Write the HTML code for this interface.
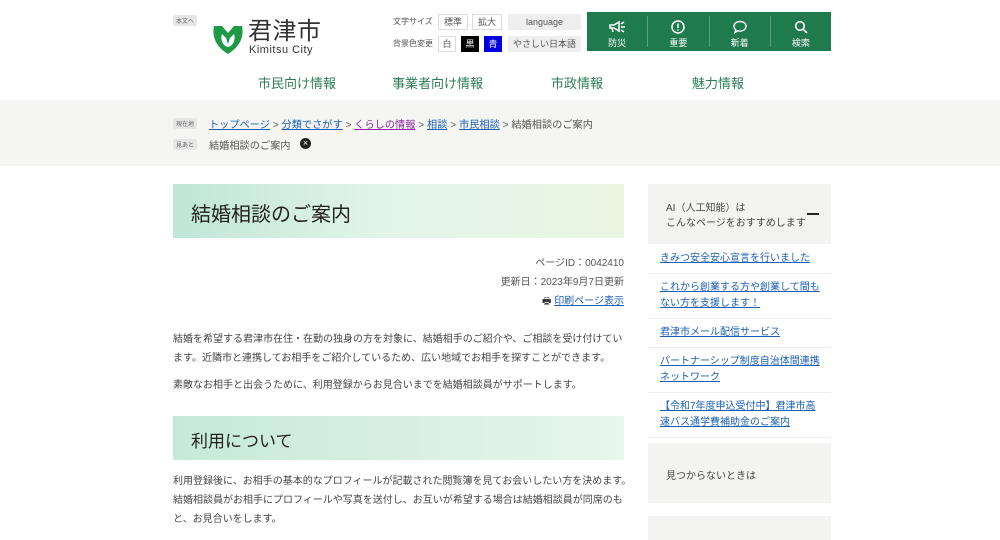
<!DOCTYPE html>
<html><head><meta charset="utf-8"><style>
*{margin:0;padding:0;box-sizing:border-box}
body{width:1000px;height:540px;overflow:hidden;background:#fff;font-family:"Liberation Sans","Noto Sans CJK JP",sans-serif;color:#333;position:relative}
.a{position:absolute}
.btn{position:absolute;font-size:9px;border:1px solid #ddd;text-align:center;line-height:14px;height:16px;color:#555;background:#fff}
.gray{background:#eee;border-color:#eee}
a{color:#1a5fb4;text-decoration:underline}
.nav{position:absolute;top:73px;font-size:13px;color:#2e7d56}
.crumb{font-size:10.2px}
.lbl{position:absolute;font-size:6px;background:#e6e6e6;color:#666;padding:1px 3px;border-radius:2px}
p.t{font-size:10px;line-height:19px;color:#444}
.side a{display:block;font-size:10px;line-height:16px;padding:6px 10px 6px 12px;border-bottom:1px solid #eee}
</style></head><body>
<div class="lbl" style="left:173px;top:15px">本文へ</div>
<svg class="a" style="left:211px;top:22px" width="34" height="34" viewBox="0 0 34 34"><path d="M3 4 L11 4 L17 11 L23 4 L31 4 C33 14 30 24 17 32 C4 24 1 14 3 4Z" fill="#1e9a46"/><path d="M11 12 C9 18 12 24 17 25 C22 24 25 18 23 12 L19 16 L17 22 L15 16Z" fill="#fff"/></svg>
<div class="a" style="left:248px;top:18px;font-size:24px;line-height:28px;color:#333;letter-spacing:0.5px">君津市</div>
<div class="a" style="left:249px;top:44px;font-size:11px;color:#333;letter-spacing:0.5px">Kimitsu City</div>
<div class="a" style="left:393px;top:16px;font-size:8px;color:#555">文字サイズ</div>
<div class="btn" style="left:438px;top:14px;width:30px">標準</div>
<div class="btn" style="left:472px;top:14px;width:30px">拡大</div>
<div class="btn gray" style="left:508px;top:14px;width:73px">language</div>
<div class="a" style="left:393px;top:38px;font-size:8px;color:#555">背景色変更</div>
<div class="btn" style="left:438px;top:36px;width:18px">白</div>
<div class="btn" style="left:461px;top:36px;width:18px;background:#000;color:#fff;border-color:#000">黒</div>
<div class="btn" style="left:484px;top:36px;width:18px;background:#0000e0;color:#fff;border-color:#0000e0">青</div>
<div class="btn gray" style="left:508px;top:36px;width:73px">やさしい日本語</div>
<div class="a" style="left:587px;top:12px;width:244px;height:39px;background:#1f7a4e;display:flex;color:#fff;font-size:9px">
<div style="flex:1;text-align:center;padding-top:4px;border-right:1px solid #5a9e7c;margin:4px 0"><svg width="18" height="14" viewBox="0 0 18 14" fill="none" stroke="#fff" stroke-width="1.5"><path d="M2 5h4l5-3v9l-5-3H2z M4 8l1 4 M13 4l3-2 M13 7h4 M13 10l3 2"/></svg><div>防災</div></div>
<div style="flex:1;text-align:center;padding-top:4px;border-right:1px solid #5a9e7c;margin:4px 0"><svg width="14" height="14" viewBox="0 0 14 14" fill="none" stroke="#fff" stroke-width="1.5"><circle cx="7" cy="7" r="6"/><path d="M7 3.5v4.5M7 9.5v1.2"/></svg><div>重要</div></div>
<div style="flex:1;text-align:center;padding-top:4px;border-right:1px solid #5a9e7c;margin:4px 0"><svg width="14" height="14" viewBox="0 0 14 14" fill="none" stroke="#fff" stroke-width="1.4"><path d="M7 1.5c3.3 0 6 2 6 4.8s-2.7 4.8-6 4.8c-.8 0-1.5-.1-2.200-.3L2 12.5l.8-2.6C1.7 9 1 7.7 1 6.3 1 3.5 3.7 1.5 7 1.5z"/></svg><div>新着</div></div>
<div style="flex:1;text-align:center;padding-top:4px;margin:4px 0"><svg width="14" height="14" viewBox="0 0 14 14" fill="none" stroke="#fff" stroke-width="1.6"><circle cx="6" cy="6" r="4.3"/><path d="M9 9l4 4"/></svg><div>検索</div></div>
</div>
<div class="nav" style="left:258px">市民向け情報</div>
<div class="nav" style="left:392px">事業者向け情報</div>
<div class="nav" style="left:551px">市政情報</div>
<div class="nav" style="left:692px">魅力情報</div>
<div class="a" style="left:0;top:100px;width:1000px;height:66px;background:#f5f5f3"></div>
<div class="lbl" style="left:173px;top:118px">現在地</div>
<div class="a crumb" style="left:209px;top:116px;color:#555"><a>トップページ</a> &gt; <a>分類でさがす</a> &gt; <a style="color:#8a2a9a">くらしの情報</a> &gt; <a>相談</a> &gt; <a>市民相談</a> &gt; 結婚相談のご案内</div>
<div class="lbl" style="left:173px;top:139px">見あと</div>
<div class="a crumb" style="left:209px;top:137px;color:#555">結婚相談のご案内</div>
<div class="a" style="left:300px;top:138px;width:11px;height:11px;border-radius:50%;background:#222;color:#fff;font-size:9px;line-height:11px;text-align:center">×</div>
<div class="a" style="left:173px;top:184px;width:451px;height:54px;background:linear-gradient(90deg,#bfe6d6,#e2f4ea 45%,#eaf6e2);"></div>
<div class="a" style="left:191px;top:198px;font-size:20px;color:#222">結婚相談のご案内</div>
<div class="a" style="right:376px;top:254px;font-size:10px;color:#555;text-align:right;line-height:19px">ページID：0042410<br>更新日：2023年9月7日更新<br><span style="color:#333">&#128438;</span> <a>印刷ページ表示</a></div>
<div class="a" style="left:173px;top:330px;width:455px"><p class="t">結婚を希望する君津市在住・在勤の独身の方を対象に、結婚相手のご紹介や、ご相談を受け付けています。近隣市と連携してお相手をご紹介しているため、広い地域でお相手を探すことができます。</p><p class="t" style="margin-top:8px">素敵なお相手と出会うために、利用登録からお見合いまでを結婚相談員がサポートします。</p></div>
<div class="a" style="left:173px;top:416px;width:451px;height:44px;background:linear-gradient(90deg,#c6e9da,#e8f6ec)"></div>
<div class="a" style="left:191px;top:427px;font-size:17px;color:#222">利用について</div>
<div class="a" style="left:173px;top:472px;width:462px"><p class="t">利用登録後に、お相手の基本的なプロフィールが記載された閲覧簿を見てお会いしたい方を決めます。結婚相談員がお相手にプロフィールや写真を送付し、お互いが希望する場合は結婚相談員が同席のもと、お見合いをします。</p></div>
<div class="a" style="left:648px;top:184px;width:183px;height:60px;background:#f3f3f1"></div>
<div class="a" style="left:666px;top:201px;font-size:10px;line-height:15px;color:#444">AI（人工知能）は<br>こんなページをおすすめします</div>
<div class="a" style="left:807px;top:213px;width:12px;height:2px;background:#222"></div>
<div class="a side" style="left:648px;top:245px;width:190px">
<a style="margin-right:7px">きみつ安全安心宣言を行いました</a>
<a style="margin-right:7px">これから創業する方や創業して間もない方を支援します！</a>
<a style="margin-right:7px">君津市メール配信サービス</a>
<a style="margin-right:7px">パートナーシップ制度自治体間連携ネットワーク</a>
<a style="margin-right:7px">【令和7年度申込受付中】君津市高速バス通学費補助金のご案内</a>
</div>
<div class="a" style="left:648px;top:443px;width:183px;height:60px;background:#f3f3f1"></div>
<div class="a" style="left:666px;top:467px;font-size:10px;color:#444">見つからないときは</div>
<div class="a" style="left:648px;top:516px;width:183px;height:24px;background:#f3f3f1"></div>
</body></html>
